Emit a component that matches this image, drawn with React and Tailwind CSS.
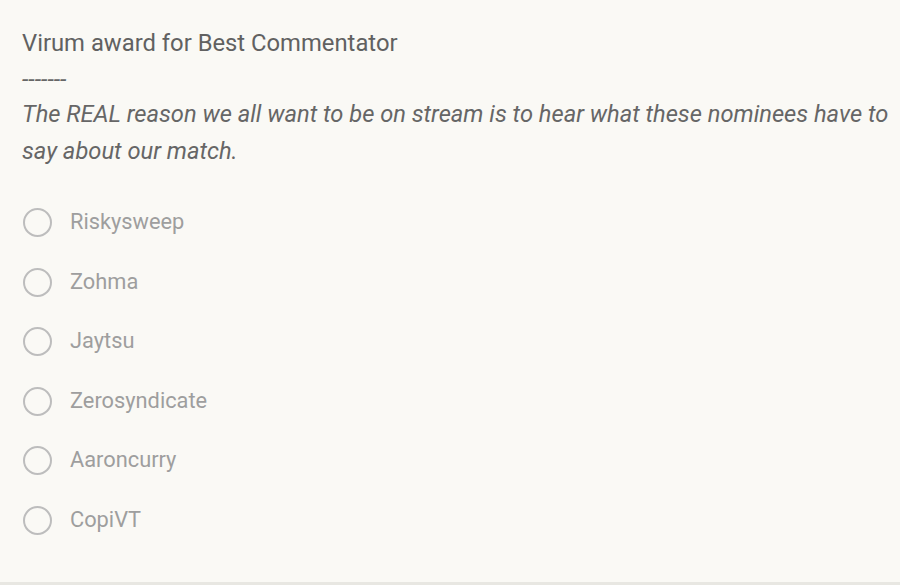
import React from "react";

const options = ["Riskysweep", "Zohma", "Jaytsu", "Zerosyndicate", "Aaroncurry", "CopiVT"];

export default function App() {
  return (
    <div
      className="w-[900px] h-[585px] bg-[#faf9f5] overflow-hidden flex flex-col"
      style={{ fontFamily: "Roboto, 'Liberation Sans', sans-serif" }}
    >
      <div className="flex-1 pl-[22px] pt-[28px]">
        <div className="text-[23.8px] leading-[30px] text-[#616161]">Virum award for Best Commentator</div>
        <div className="text-[23.7px] leading-[37px] text-[#666] italic">
          <div className="leading-[31px] mt-[6px]">-------</div>
          <div className="pr-[6px] mt-[1px]">The REAL reason we all want to be on stream is to hear what these nominees have to say about our match.</div>
        </div>
        <div className="flex flex-col mt-[23px]">
          {options.map((o) => (
            <div key={o} className="flex items-center h-[59.5px]">
              <div className="w-[29px] h-[29px] rounded-full border-2 border-[#bdbdbd] ml-[1px]" />
              <span className="ml-[18px] text-[21.8px] text-[#9e9e9e]">{o}</span>
            </div>
          ))}
        </div>
      </div>
      <div className="h-[3px] bg-[#e8e7e2]" />
    </div>
  );
}
